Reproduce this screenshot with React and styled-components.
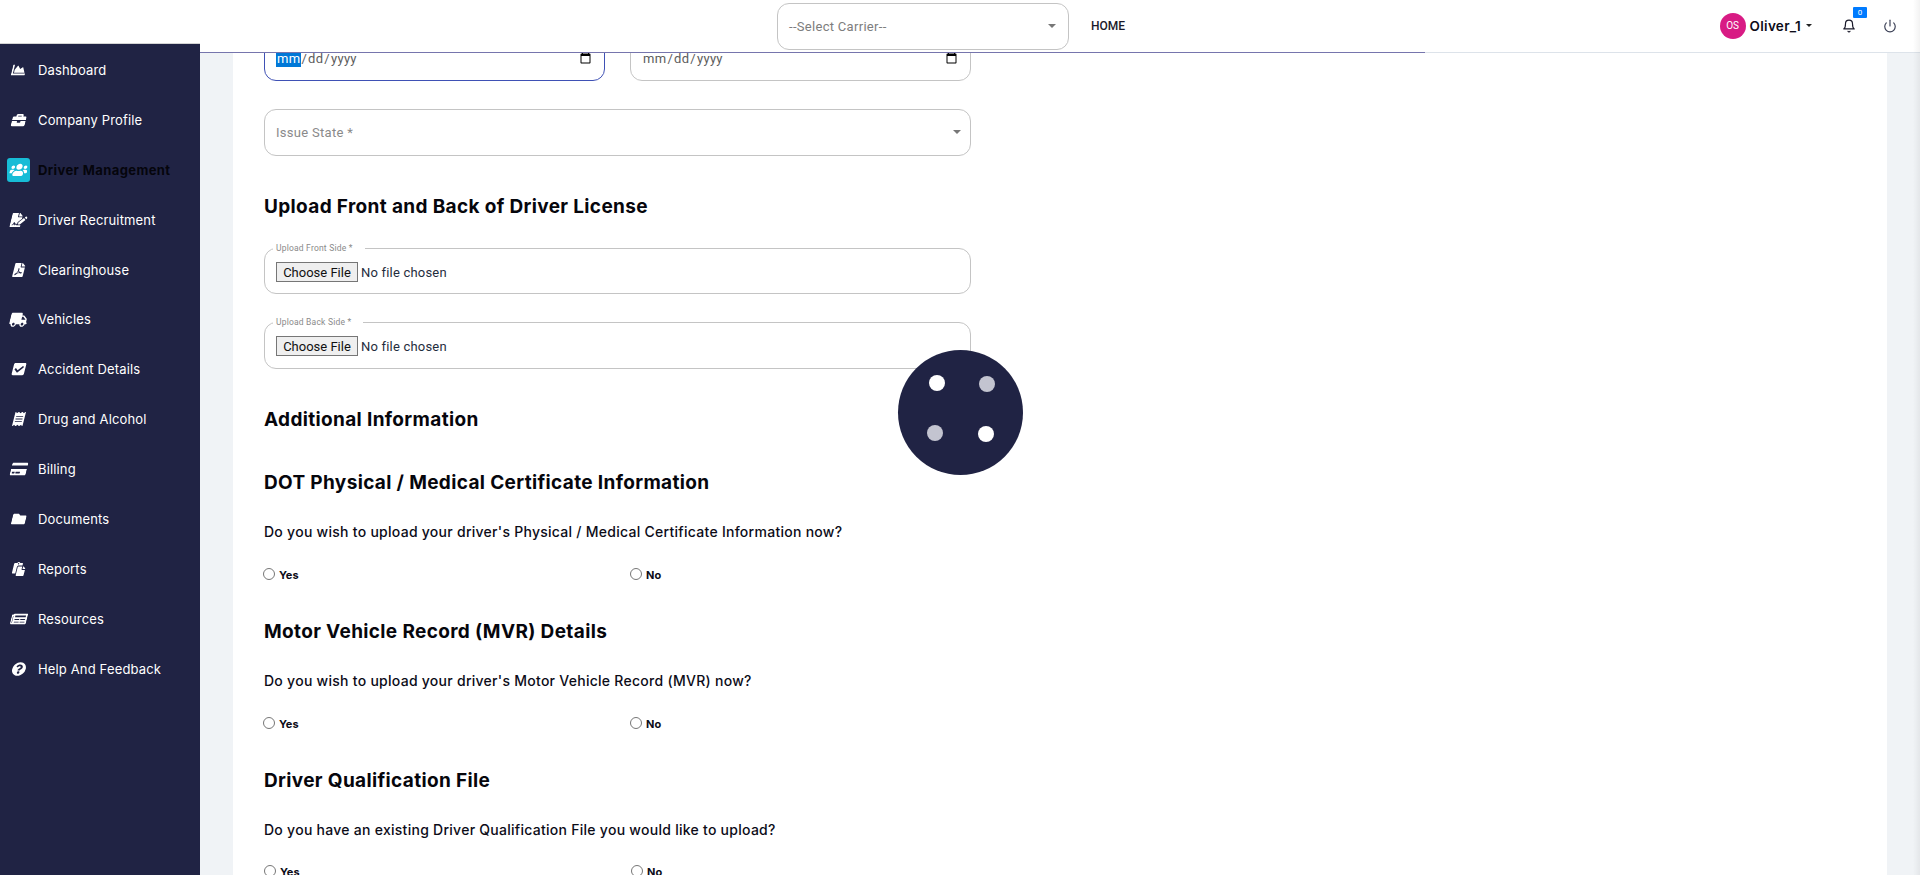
import React from "react";
import styled, { createGlobalStyle } from "styled-components";
import {
  FaChartArea,
  FaBriefcase,
  FaUsers,
  FaFileSignature,
  FaFilePdf,
  FaTruck,
  FaCheckSquare,
  FaReceipt,
  FaCreditCard,
  FaFolder,
  FaPaste,
  FaNewspaper,
  FaQuestionCircle,
} from "react-icons/fa";
import { FiBell, FiPower } from "react-icons/fi";

const menu = [
  { label: "Dashboard", icon: FaChartArea, size: 14 },
  { label: "Company Profile", icon: FaBriefcase, size: 14 },
  { label: "Driver Management", icon: FaUsers, size: 17.5, active: true },
  { label: "Driver Recruitment", icon: FaFileSignature, size: 16 },
  { label: "Clearinghouse", icon: FaFilePdf, size: 14 },
  { label: "Vehicles", icon: FaTruck, size: 17.5 },
  { label: "Accident Details", icon: FaCheckSquare, size: 14 },
  { label: "Drug and Alcohol", icon: FaReceipt, size: 14 },
  { label: "Billing", icon: FaCreditCard, size: 16 },
  { label: "Documents", icon: FaFolder, size: 14 },
  { label: "Reports", icon: FaPaste, size: 14 },
  { label: "Resources", icon: FaNewspaper, size: 16 },
  { label: "Help And Feedback", icon: FaQuestionCircle, size: 14 },
];

const uploads = [
  { title: "DOT Physical / Medical Certificate Information", question: "Do you wish to upload your driver's Physical / Medical Certificate Information now?", name: "dot" },
  { title: "Motor Vehicle Record (MVR) Details", question: "Do you wish to upload your driver's Motor Vehicle Record (MVR) now?", name: "mvr" },
  { title: "Driver Qualification File", question: "Do you have an existing Driver Qualification File you would like to upload?", name: "dqf" },
];

export default function App() {
  return (
    <Page>
      <GlobalStyle />
      <Header>
        <CarrierSelect>
          --Select Carrier--
          <Arrow $right={12} />
        </CarrierSelect>
        <HomeLink>HOME</HomeLink>
        <UserArea>
          <Avatar>OS</Avatar>
          <UserName>Oliver_1</UserName>
          <UserCaret />
          <BellWrap>
            <FiBell size={14} />
            <Badge>0</Badge>
          </BellWrap>
          <PowerWrap>
            <FiPower size={14} />
          </PowerWrap>
        </UserArea>
        <Progress />
      </Header>
      <Body>
        <Sidebar>
          {menu.map((item) => (
            <MenuRow key={item.label} $active={item.active}>
              <MenuIcon $active={item.active}>
                <item.icon size={item.size} />
              </MenuIcon>
              {item.label}
            </MenuRow>
          ))}
        </Sidebar>
        <Main>
          <Card>
            <FieldGrid>
              <DateInput type="date" autoFocus $focused />
              <DateInput type="date" />
              <StateSelect>
                Issue State *
                <Arrow $right={9} />
              </StateSelect>
            </FieldGrid>
            <UploadHeading>Upload Front and Back of Driver License</UploadHeading>
            <FileBox>
              <FileLegend>Upload Front Side *</FileLegend>
              <FileInput type="file" />
            </FileBox>
            <FileBox $second>
              <FileLegend>Upload Back Side *</FileLegend>
              <FileInput type="file" />
            </FileBox>
            <AdditionalHeading>Additional Information</AdditionalHeading>
            {uploads.map((section) => (
              <Section key={section.name}>
                <Heading>{section.title}</Heading>
                <Question>{section.question}</Question>
                <RadioRow>
                  <RadioLabel>
                    <Radio type="radio" name={section.name} />
                    Yes
                  </RadioLabel>
                  <RadioLabel>
                    <Radio type="radio" name={section.name} />
                    No
                  </RadioLabel>
                </RadioRow>
              </Section>
            ))}
          </Card>
        </Main>
      </Body>
      <Loader>
        <Dot $x={31.5} $y={24.5} />
        <Dot $x={81.5} $y={26} $dim />
        <Dot $x={29.5} $y={74.5} $dim />
        <Dot $x={80} $y={76} />
      </Loader>
    </Page>
  );
}

const GlobalStyle = createGlobalStyle`
  html, body {
    margin: 0;
    height: 100%;
    overflow: hidden;
    background: #f0f3f6;
  }
  * {
    box-sizing: border-box;
  }
`;

const Page = styled.div`
  position: relative;
  height: 875px;
  display: flex;
  flex-direction: column;
  overflow: hidden;
  font-family: Inter, "Noto Sans", sans-serif;

  /* faint shadow down the right edge of the window */
  &::after {
    content: "";
    position: absolute;
    z-index: 4;
    top: 0;
    right: 0;
    bottom: 0;
    width: 7px;
    background: linear-gradient(to right, rgba(0, 0, 0, 0), rgba(0, 0, 0, 0.05));
  }
`;

const Header = styled.header`
  position: relative;
  z-index: 1;
  flex: none;
  height: 53px;
  display: flex;
  align-items: flex-start;
  padding: 3px 23px 0 777px;
  background: #fff;
  border-bottom: 1px solid #dde3ea;
`;

const Progress = styled.div`
  position: absolute;
  left: 0;
  bottom: -1px;
  width: 1425px;
  height: 1px;
  background: #7675ad;
`;

const Arrow = styled.span`
  position: absolute;
  right: ${(p) => p.$right}px;
  top: 50%;
  margin-top: -3px;
  border-left: 4px solid transparent;
  border-right: 4px solid transparent;
  border-top: 4px solid #777;
`;

const CarrierSelect = styled.div`
  position: relative;
  flex: none;
  width: 292px;
  height: 47px;
  display: flex;
  align-items: center;
  padding-left: 11px;
  border: 1px solid #c4c4c4;
  border-radius: 12px;
  background: #fff;
  font: 400 13px Roboto, sans-serif;
  letter-spacing: 0.3px;
  color: #7d7d7d;
`;

const HomeLink = styled.a`
  flex: none;
  margin: 16px 0 0 22px;
  font: 500 12px/14px Roboto, sans-serif;
  color: #1a1a2a;
`;

const UserArea = styled.div`
  flex: none;
  display: flex;
  align-items: center;
  height: 45px;
  margin-left: auto;
`;

const Avatar = styled.div`
  width: 26px;
  height: 26px;
  display: flex;
  align-items: center;
  justify-content: center;
  border-radius: 50%;
  background: #d81b84;
  color: #fff;
  font: 400 10px Roboto, sans-serif;
`;

const UserName = styled.span`
  margin-left: 4px;
  font-size: 13.5px;
  font-weight: 600;
  letter-spacing: 0.3px;
  color: #0c0c18;
`;

const UserCaret = styled.span`
  margin-left: 5px;
  border-left: 3px solid transparent;
  border-right: 3px solid transparent;
  border-top: 3px solid #222;
`;

const BellWrap = styled.div`
  position: relative;
  display: flex;
  margin-left: 30px;
  color: #1a1a2a;
`;

const Badge = styled.span`
  position: absolute;
  top: -12px;
  left: 11px;
  width: 14px;
  height: 11px;
  display: flex;
  align-items: center;
  justify-content: center;
  border-radius: 1px;
  background: #007bff;
  color: #fff;
  font: 400 8px Roboto, sans-serif;
`;

const PowerWrap = styled.div`
  display: flex;
  margin-left: 27px;
  color: #3a3f55;
`;

const Body = styled.div`
  flex: 1;
  min-height: 0;
  display: flex;
`;

const Sidebar = styled.nav`
  position: relative;
  z-index: 2;
  flex: none;
  width: 200px;
  margin-top: -10px;
  padding-top: 1px;
  border-top: 1px solid #d4d4d4;
  background: #202344;
`;

const MenuRow = styled.div`
  height: 49.9px;
  display: flex;
  align-items: center;
  font-size: 13px;
  font-weight: ${(p) => (p.$active ? 700 : 400)};
  letter-spacing: ${(p) => (p.$active ? "0.4px" : "0.15px")};
  color: ${(p) => (p.$active ? "#05050c" : "#fff")};
`;

const MenuIcon = styled.span`
  flex: none;
  width: 23px;
  height: 24px;
  margin: 0 8px 0 7px;
  display: flex;
  align-items: center;
  justify-content: center;
  border-radius: 3px;
  background: ${(p) => (p.$active ? "#17bcd6" : "transparent")};
  color: #fff;

  svg {
    transform: skewX(-14deg);
  }
`;

const Main = styled.main`
  flex: 1;
  min-width: 0;
  padding: 0 33px;
  overflow: hidden;
`;

// the page is scrolled a little, so the date row slides under the header
const Card = styled.div`
  margin-top: -18px;
  min-height: 900px;
  padding: 0 0 0 31px;
  background: #fff;
`;

const FieldGrid = styled.div`
  width: 707px;
  display: grid;
  grid-template-columns: 341px 341px;
  column-gap: 25px;
  row-gap: 28px;
`;

const DateInput = styled.input`
  width: 100%;
  height: 46px;
  padding: 0 10px 0 11px;
  border: 1px solid ${(p) => (p.$focused ? "#3f51b5" : "#c4c4c4")};
  border-radius: 12px;
  outline: none;
  background: #fff;
  font: 400 13px Roboto, sans-serif;
  letter-spacing: 0.3px;
  color: #5c5c5c;

  &:focus::-webkit-datetime-edit-month-field,
  &::-webkit-datetime-edit-month-field:focus {
    background-color: #0078d7;
    color: #fff;
  }
`;

const StateSelect = styled.div`
  position: relative;
  grid-column: 1 / span 2;
  height: 47px;
  display: flex;
  align-items: center;
  padding-left: 11px;
  border: 1px solid #c4c4c4;
  border-radius: 12px;
  font: 400 13px Roboto, sans-serif;
  letter-spacing: 0.3px;
  color: #8a8a8a;
`;

const Heading = styled.h2`
  margin: 0;
  height: 24px;
  font-size: 19px;
  line-height: 24px;
  font-weight: 700;
  letter-spacing: 0.35px;
  color: #06060c;
`;

const UploadHeading = styled(Heading)`
  margin-top: 39px;
`;

const AdditionalHeading = styled(Heading)`
  margin: 39px 0 39px;
`;

const FileBox = styled.fieldset`
  width: 707px;
  height: ${(p) => (p.$second ? "52px" : "51px")};
  margin: ${(p) => (p.$second ? "23px" : "24px")} 0 0;
  padding: 0 0 0 11px;
  border: 1px solid #c4c4c4;
  border-radius: 12px;
`;

const FileLegend = styled.legend`
  margin-left: -3px;
  padding: 0 12px 0 3px;
  font: 400 8.5px/10px Roboto, sans-serif;
  letter-spacing: 0.2px;
  color: #8a8a8a;
`;

const FileInput = styled.input`
  display: block;
  margin-top: 9px;
  font: 400 13px Roboto, sans-serif;
  letter-spacing: 0.2px;
  color: #1f2d3d;

  &::file-selector-button {
    width: 82px;
    height: 20px;
    margin-right: 3px;
    padding: 0;
    border: 1px solid #767676;
    border-radius: 0;
    background: #efefef;
    font: inherit;
    color: #111;
  }
`;

const Section = styled.section`
  height: 149px;
`;

const Question = styled.p`
  margin: 27px 0 0;
  font-size: 14px;
  line-height: 20px;
  font-weight: 500;
  letter-spacing: 0.27px;
  color: #0c0c18;
`;

const RadioRow = styled.div`
  margin: 23px 0 0 -1px;
  display: grid;
  grid-template-columns: 367px 1fr;
  width: 707px;

  section:last-of-type & {
    margin: 22px 0 0;
  }
`;

const RadioLabel = styled.label`
  display: flex;
  align-items: center;
  height: 20px;
  font-size: 11px;
  font-weight: 700;
  color: #0c0c18;
`;

const Radio = styled.input`
  width: 12px;
  height: 12px;
  margin: 0 4px 2px 0;
`;

const Loader = styled.div`
  position: absolute;
  z-index: 3;
  left: 897.5px;
  top: 350px;
  width: 125px;
  height: 125px;
  border-radius: 50%;
  background: #202344;
`;

const Dot = styled.span`
  position: absolute;
  left: ${(p) => p.$x}px;
  top: ${(p) => p.$y}px;
  width: 16px;
  height: 16px;
  border-radius: 50%;
  background: ${(p) => (p.$dim ? "#c3c4d0" : "#fff")};
`;
